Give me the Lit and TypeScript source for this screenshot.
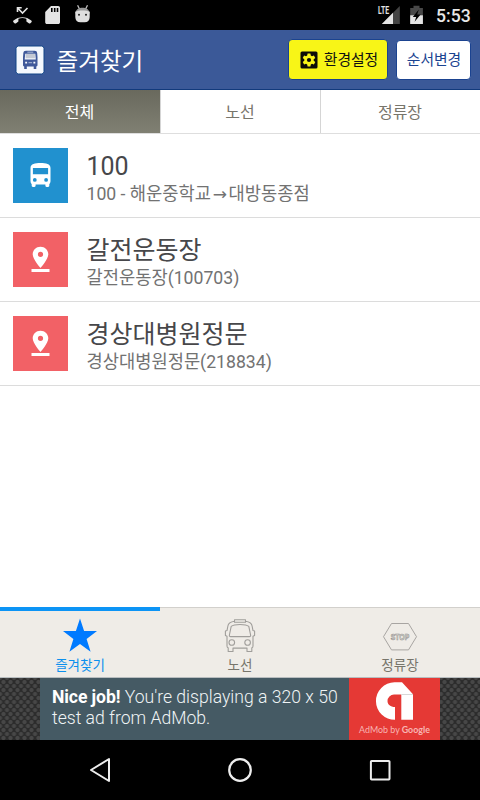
import { LitElement, html, css, svg } from "lit";
import { customElement } from "lit/decorators.js";
import { classMap } from "lit/directives/class-map.js";

const pinIcon = svg`<path fill="#fff" fill-rule="evenodd" d="M27.5 14.700c-4.400 0-7.800 3.400-7.800 7.600 0 5.200 7.800 13.600 7.800 13.600s7.800-8.400 7.800-13.600c0-4.200-3.400-7.600-7.800-7.600Zm0 5a2.600 2.600 0 1 1 0 5.200 2.600 2.600 0 0 1 0-5.200ZM18.500 37h18v3h-18Z"/>`;
const busIcon = svg`<path fill="#fff" fill-rule="evenodd" d="M17.5 20c0-4.2 4.5-5 10-5s10 .8 10 5v13c0 1.300-.5 2.400-1.200 3.200v1.600c0 .7-.5 1.200-1.200 1.200h-1.500c-.7 0-1.200-.5-1.200-1.200v-1.200h-9.800v1.200c0 .7-.5 1.200-1.200 1.200h-1.500c-.7 0-1.200-.5-1.200-1.200v-1.600a4.500 4.500 0 0 1-1.200-3.200Zm2.400 0v6.200h15.200V20Zm1.900 10a1.900 1.900 0 1 0 0 3.800 1.900 1.900 0 0 0 0-3.800Zm11.300 0a1.900 1.900 0 1 0 0 3.800 1.900 1.900 0 0 0 0-3.800Z"/>`;

const starIcon = svg`<path fill="#007aff" d="M20 .5l4.100 12.600H37l-10.400 7.900 4 12.700L20 25.900 9.400 33.700l4-12.700L3 13.100h12.900Z"/>`;
const busOutline = svg`<g fill="none" stroke="#a09e9b" stroke-width="1.100" stroke-linejoin="round">
  <path d="M14.500 4.300V1.800h11v2.500ZM14.500 3.300C9.500 4 8.200 5.500 7.900 8L7 12.600l-1.600.5v4.400l1.600.8V28c0 1 .2 1.600 1.200 1.900v3.600H13v-3.400h14v3.400h4.800v-3.600c1-.3 1.200-.9 1.200-1.900v-9.700l1.600-.8v-4.400l-1.600-.5L32.100 8c-.3-2.500-1.600-4-6.600-4.700"/>
  <path d="M11.200 8.400c3-2.600 14.600-2.600 17.600 0l1.800 8.600c.2 1-.2 1.600-1.200 1.600H10.600c-1 0-1.400-.6-1.200-1.600Z"/>
  <circle cx="11.800" cy="24.500" r="2.800"/><circle cx="27.600" cy="24.500" r="2.800"/></g>`;
const stopIcon = svg`<path d="M11.500 5.500h17l8 13.200-8 13.200h-17L3.500 18.700Z" fill="none" stroke="#a8a5a2" stroke-width="1"/>
  <text x="20" y="21.800" text-anchor="middle" textLength="18.500" lengthAdjust="spacingAndGlyphs" class="stop">STOP</text>`;

const rows = [
  { kind: "bus", title: "100", sub: html`100 - 해운중학교<span class="arrow">→</span>대방동종점` },
  { kind: "stop", title: "갈전운동장", sub: "갈전운동장(100703)" },
  { kind: "stop", title: "경상대병원정문", sub: "경상대병원정문(218834)" },
];
const tabs = ["전체", "노선", "정류장"];
const nav = [
  { label: "즐겨찾기", icon: starIcon },
  { label: "노선", icon: busOutline },
  { label: "정류장", icon: stopIcon },
];

@customElement("app-root")
export class AppRoot extends LitElement {
  static styles = css`
    :host { display: flex; flex-direction: column; width: 480px; height: 800px; overflow: hidden; background: #fff;
      font-family: Roboto, "Noto Sans CJK KR", sans-serif; white-space: nowrap; }
    * { box-sizing: border-box; }
    svg { display: block; flex: none; }
    .status { height: 30px; background: #000; flex: none; display: flex; }
    .clock { color: #e8e8e8; font-size: 17.6px; font-weight: 500; line-height: 32px; }
    .header { height: 60px; flex: none; background: #3b5998; border-bottom: 1px solid #123a7c; display: flex; align-items: center; padding: 0 9px 0 15px; }
    .title { color: #fff; font-size: 23.6px; line-height: 30px; margin-left: 11.500px; padding-top: 4px; flex: 1; }
    .btn { display: flex; align-items: center; justify-content: center; border: 1px solid #1b4390; border-radius: 4px; font-size: 14.8px; line-height: 20px; }
    .btn span { padding-top: 1px; }
    .settings { width: 100px; height: 41px; background: #f8f517; color: #111; gap: 6px; margin-right: 8px; padding-left: 2px; }
    .order { width: 75px; height: 40px; background: #fff; color: #1b4390; padding-left: 1px; }
    .tabs { height: 44px; flex: none; display: grid; grid-template-columns: 161px 160px 159px; border-bottom: 1px solid #dedede; }
    .tab { color: #77756b; font-size: 16px; line-height: 45px; height: 43px; text-align: center; border-right: 1px solid #d5d5d5; padding-right: 1px; }
    .tab:last-child { border-right: 0; }
    .tab.on { color: #fff; background: linear-gradient(#69695d, #808073); }
    .list { flex: 1; }
    .row { height: 84px; border-bottom: 1px solid #dcdcdc; padding-left: 12.500px; display: flex; align-items: center; }
    .tile { width: 55px; height: 55px; margin-right: 19px; background: #f26166; }
    .tile.bus { background: #2191cf; }
    .words { padding-top: 6px; }
    .name { color: #47474a; font-size: 25px; line-height: 31px; }
    .sub { color: #727272; font-size: 17.65px; line-height: 25px; }
    .arrow { display: inline-block; width: 17.500px; text-align: center; font: 17px/20px "DejaVu Sans", sans-serif; }
    .nav { height: 71px; flex: none; display: grid; grid-template-columns: repeat(3, 1fr); background: #efece7; border-bottom: 1px solid #b8bdbf; }
    .item { display: flex; flex-direction: column; align-items: center; border-top: 1px solid #d2d0cc; padding-top: 10px; color: #77756b; font-size: 13.5px; line-height: 20px; }
    .item.on { border-top: 4px solid #0c94f5; padding-top: 7px; color: #0c90ee; }
    .stop { font: bold 8.500px "Liberation Sans", sans-serif; fill: #efece7; stroke: #92908d; stroke-width: .6px; }
    .ad { height: 62px; flex: none; display: flex; padding: 0 40px; background-color: #2c2c2c;
      background-image: radial-gradient(circle, #474747 1.6px, transparent 2.6px), radial-gradient(circle, #474747 1.6px, transparent 2.6px);
      background-size: 7px 8px; background-position: 0 0, 3.500px 4px; }
    .copy { width: 309px; background: #455a64; color: #f0f4f5; font-size: 17.6px; font-weight: 300; line-height: 21px; padding: 9px 0 0 12px; }
    .copy b { font-weight: 700; color: #fff; letter-spacing: -.1px; }
    .admob { width: 91px; background: #e53935; display: flex; flex-direction: column; }
    .brand { font: 8.900px/14px Lato, sans-serif; color: #f8b5b3; display: flex; justify-content: center; gap: 2px; margin-top: 1px; }
    .brand b { font-weight: 700; }
    .soft { height: 60px; flex: none; background: #000; display: flex; justify-content: center; gap: 100px; }
  `;

  render() {
    return html`
      <div class="status">
        <svg width="436" height="30" viewBox="0 0 436 30">
          <path d="M13.500 22.300c-.5-.5-.5-1.300 0-1.800 5-4.500 12.800-4.500 17.800 0 .6.5.6 1.300.1 1.800l-1 1c-.5.4-1.200.4-1.600 0l-2.400-1.800v-2.800a14 14 0 0 0-8 0v2.800l-2.300 1.800c-.5.4-1.200.4-1.600 0Z" fill="#e4e4e4"/>
          <path d="M17.500 12V7.800h4.200M18 8.300l4.500 4.700 5-5" fill="none" stroke="#e4e4e4" stroke-width="1.600"/>
          <path fill="#e4e4e4" fill-rule="evenodd" d="M51 6h7.200c1 0 1.800.8 1.800 1.800v14.400c0 1-.8 1.800-1.800 1.800H47c-1 0-1.800-.8-1.800-1.800V12Zm0 2v4h1.600V8Zm2.900 0v4h1.600V8Zm2.800 0v4h1.600V8Z"/>
          <path d="M77.600 5.200l2 4M87.500 5.200l-2 4" stroke="#bebebe" stroke-width="1.300"/>
          <path d="M75.300 13.500c0-3.400 3-5.700 7.200-5.700s7.200 2.300 7.200 5.700Z" fill="#999"/>
          <path d="M75.300 11.800c4-1.600 10.400-1.600 14.400 0V17c0 3.500-2 5.200-5 5.200h-4.400c-3 0-5-1.700-5-5.200Z" fill="#dedede"/>
          <circle cx="79" cy="14.700" r="1" fill="#222"/><circle cx="86" cy="14.700" r="1" fill="#222"/>
          <text x="378" y="14" textLength="11" lengthAdjust="spacingAndGlyphs" font-size="10" font-weight="700" fill="#e4e4e4">LTE</text>
          <path d="M399.800 6v18h-18Z" fill="#444"/><path d="M393 12.800V24h-11.200Z" fill="#e4e4e4"/>
          <path d="M413.500 5.800h6V8h3.400v16h-12.700V8h3.300Z" fill="#484848"/><path d="M410.200 15.300h12.700V24h-12.700Z" fill="#e4e4e4"/>
          <path d="M418.800 9.500l-6 7.500h3.400l-1.600 4.700 6-7.200h-3.400Z" fill="#000"/>
        </svg>
        <div class="clock">5:53</div>
      </div>
      <div class="header">
        <svg width="30" height="30" viewBox="0 0 30 30">
          <rect x="1" y="1" width="28" height="28" rx="2.500" fill="#f5f8fd" stroke="#124486"/>
          <path fill="#40599a" fill-rule="evenodd" d="M11 5.800h8.500c1.800 0 2.500.8 2.700 2.500l.3 4V20c0 .9-.4 1.400-1.200 1.500V24h-2.600v-2.500h-6.900V24H9.200v-2.500C8.400 21.400 8 20.900 8 20v-7.700l.3-4C8.500 6.600 9.200 5.800 11 5.800ZM10.200 8.800l-.5 5.700h11.100l-.5-5.700ZM10.200 16.800v1.800h1.900v-1.800Zm8.200 0v1.800h1.900v-1.800Z"/>
          <path d="M10.600 9h9.300v4.300h-9.300Z" fill="#c3c8d4"/>
          <path d="M13.500 17.700h3.600M12.300 7.200h6" stroke="#b9c5de" stroke-width=".9"/>
        </svg>
        <div class="title">즐겨찾기</div>
        <div class="btn settings">
          <svg width="18" height="18" viewBox="0 0 18 18">
            <rect x=".5" y=".5" width="17" height="17" rx="1.500" fill="#0c0c08"/>
            <path d="M7.600 2.500h2.800l.4 2 1.200.7 1.900-.7 1.400 2.400-1.600 1.300v1.600l1.600 1.300-1.400 2.400-1.900-.7-1.200.7-.4 2H7.600l-.4-2-1.200-.7-1.900.7-1.400-2.400 1.600-1.300V8.200L2.700 6.900l1.400-2.400 1.900.7 1.200-.7Z" fill="#f8f517"/>
            <circle cx="9" cy="9" r="2.100" fill="#0c0c08"/>
          </svg><span>환경설정</span>
        </div>
        <div class="btn order"><span>순서변경</span></div>
      </div>
      <div class="tabs">${tabs.map((t, i) => html`<div class=${classMap({ tab: true, on: i === 0 })}>${t}</div>`)}</div>
      <div class="list">
        ${rows.map((r) => html`<div class="row">
          <svg class=${classMap({ tile: true, bus: r.kind === "bus" })} viewBox="0 0 55 55">${r.kind === "bus" ? busIcon : pinIcon}</svg>
          <div class="words"><div class="name">${r.title}</div><div class="sub">${r.sub}</div></div>
        </div>`)}
      </div>
      <div class="nav">
        ${nav.map((n, i) => html`<div class=${classMap({ item: true, on: i === 0 })}>
          <svg width="40" height="37" viewBox="0 0 40 37">${n.icon}</svg><div>${n.label}</div>
        </div>`)}
      </div>
      <div class="ad">
        <div class="copy"><b>Nice job!</b> You're displaying a 320 x 50<br>test ad from AdMob.</div>
        <div class="admob">
          <svg width="91" height="44" viewBox="0 0 91 44">
            <path d="M45.500 4.200H53L64 16.200v25.600H52.300V16.500H45a6.500 6.500 0 0 0-6.500 6.500c0 3.500 3 6 7.500 6v12.800A18.800 18.800 0 0 1 45.500 4.200Z" fill="#fff"/>
            <path d="M52.300 16.500H64" stroke="#d8d8d8"/>
          </svg>
          <div class="brand"><span>AdMob by</span><b>Google</b></div>
        </div>
      </div>
      <div class="soft">
        <svg width="40" height="60" viewBox="0 0 40 60"><path d="M11 30l18-11v22Z" fill="none" stroke="#ededed" stroke-width="2" stroke-linejoin="round"/></svg>
        <svg width="40" height="60" viewBox="0 0 40 60"><circle cx="20" cy="30" r="10.800" fill="none" stroke="#ededed" stroke-width="2.200"/></svg>
        <svg width="40" height="60" viewBox="0 0 40 60"><rect x="10.900" y="20.900" width="18.600" height="18.600" rx=".7" fill="none" stroke="#ededed" stroke-width="2"/></svg>
      </div>`;
  }
}
